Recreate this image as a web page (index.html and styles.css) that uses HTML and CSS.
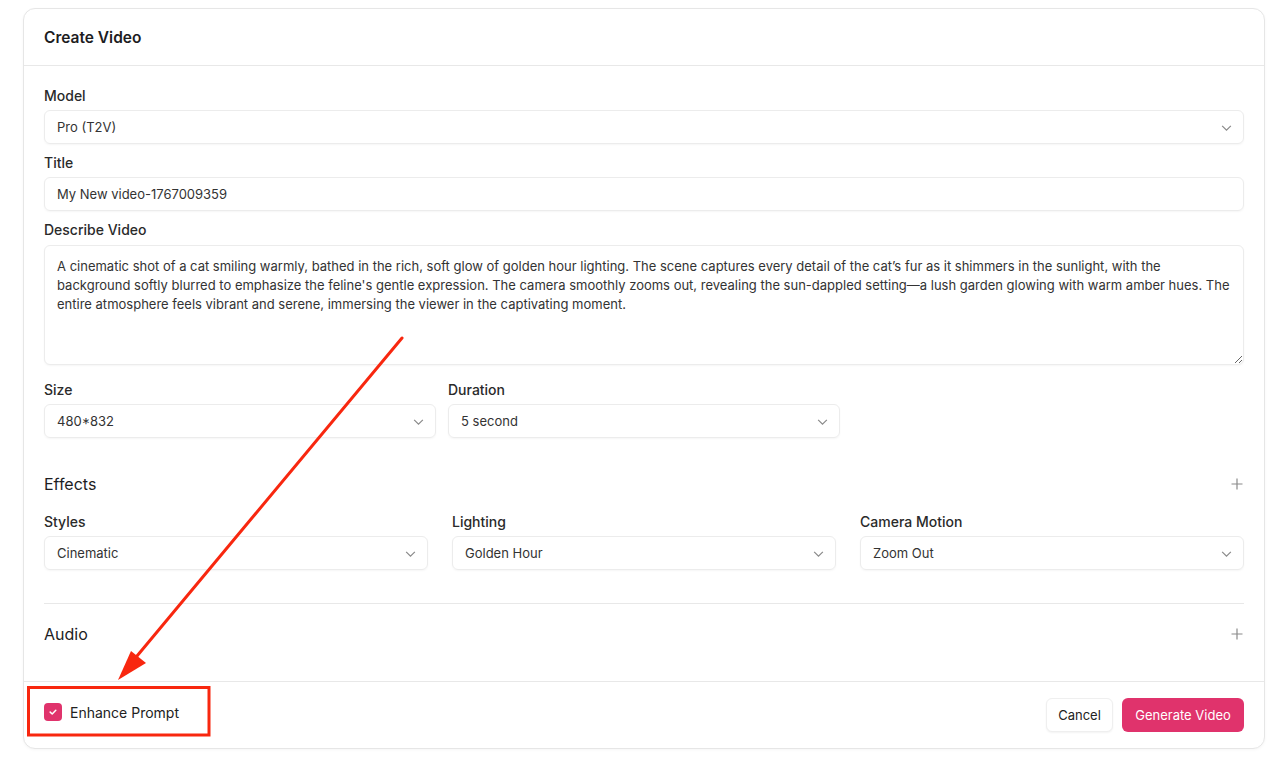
FILE: index.html
```html
<!DOCTYPE html>
<html lang="en">
<head>
<meta charset="utf-8">
<title>Create Video</title>
<link rel="stylesheet" href="styles.css">
</head>
<body>
<div class="page">
  <div class="card">
    <div class="card-header"><h1 class="card-title">Create Video</h1></div>
    <div class="card-body">
      <div class="field">
        <label class="label">Model</label>
        <div class="select"><span>Pro (T2V)</span><svg class="chev" viewBox="0 0 12 12"><path d="M2 4.5l4 4 4-4"/></svg></div>
      </div>
      <div class="field">
        <label class="label">Title</label>
        <div class="input">My New video-1767009359</div>
      </div>
      <div class="field field-text">
        <label class="label">Describe Video</label>
        <textarea class="textarea" rows="5">A cinematic shot of a cat smiling warmly, bathed in the rich, soft glow of golden hour lighting. The scene captures every detail of the cat’s fur as it shimmers in the sunlight, with the background softly blurred to emphasize the feline's gentle expression. The camera smoothly zooms out, revealing the sun-dappled setting—a lush garden glowing with warm amber hues. The entire atmosphere feels vibrant and serene, immersing the viewer in the captivating moment.</textarea>
      </div>
      <div class="grid3">
        <div class="field">
          <label class="label">Size</label>
          <div class="select"><span>480*832</span><svg class="chev" viewBox="0 0 12 12"><path d="M2 4.5l4 4 4-4"/></svg></div>
        </div>
        <div class="field">
          <label class="label">Duration</label>
          <div class="select"><span>5 second</span><svg class="chev" viewBox="0 0 12 12"><path d="M2 4.5l4 4 4-4"/></svg></div>
        </div>
      </div>

      <div class="section effects">
        <div class="section-head">
          <h2 class="section-title">Effects</h2>
          <svg class="plus" viewBox="0 0 12 12"><path d="M6 0.5v11M0.5 6h11"/></svg>
        </div>
        <div class="grid3 wide-gap">
          <div class="field">
            <label class="label">Styles</label>
            <div class="select"><span>Cinematic</span><svg class="chev" viewBox="0 0 12 12"><path d="M2 4.5l4 4 4-4"/></svg></div>
          </div>
          <div class="field">
            <label class="label">Lighting</label>
            <div class="select"><span>Golden Hour</span><svg class="chev" viewBox="0 0 12 12"><path d="M2 4.5l4 4 4-4"/></svg></div>
          </div>
          <div class="field">
            <label class="label">Camera Motion</label>
            <div class="select"><span>Zoom Out</span><svg class="chev" viewBox="0 0 12 12"><path d="M2 4.5l4 4 4-4"/></svg></div>
          </div>
        </div>
      </div>

      <div class="section audio">
        <div class="section-head">
          <h2 class="section-title">Audio</h2>
          <svg class="plus" viewBox="0 0 12 12"><path d="M6 0.5v11M0.5 6h11"/></svg>
        </div>
      </div>
    </div>
    <div class="card-footer">
      <label class="check">
        <span class="box"><svg viewBox="0 0 12 12"><path d="M3.2 6.1l2 1.9 3.6-3.8"/></svg></span>
        <span class="check-text">Enhance Prompt</span>
      </label>
      <div class="actions">
        <button class="btn btn-ghost">Cancel</button>
        <button class="btn btn-primary">Generate Video</button>
      </div>
    </div>
  </div>
</div>
<svg class="annotation" width="1272" height="768" viewBox="0 0 1272 768">
  <line x1="402" y1="338" x2="132" y2="662" stroke="#f8270f" stroke-width="3" stroke-linecap="round"/>
  <polygon points="118,680 131,651 146,663" fill="#f8270f"/>
  <rect x="28.5" y="687.5" width="180.5" height="47.5" fill="none" stroke="#f8270f" stroke-width="3"/>
</svg>
</body>
</html>
```
FILE: styles.css
```css
* { box-sizing: border-box; }
html, body { margin: 0; padding: 0; background: #fff; }
body {
  font-family: Inter, "Noto Sans", "Liberation Sans", sans-serif;
  color: #222;
  width: 1272px;
  height: 768px;
  overflow: hidden;
  position: relative;
}
.page { padding: 8px 7px 0 23px; }
.card {
  border: 1px solid #e6e6e6;
  border-radius: 12px;
  background: #fff;
  box-shadow: 0 1px 3px rgba(0,0,0,0.04);
}
.card-header {
  height: 57px;
  display: flex;
  align-items: center;
  padding: 0 20px;
  border-bottom: 1px solid #e8e8e8;
}
.card-title { margin: 0; font-size: 15.5px; font-weight: 600; color: #1d1d1f; }
.card-body { padding: 20px 20px 0 20px; }
.field { display: flex; flex-direction: column; gap: 4px; margin-bottom: 9px; }
.field-text { margin-bottom: 15px; }
.label { font-size: 14px; line-height: 20px; font-weight: 500; color: #2a2a2a; }
.select, .input {
  height: 34px;
  border: 1px solid #ececec;
  border-radius: 6px;
  box-shadow: 0 1px 2px rgba(0,0,0,0.04);
  display: flex;
  align-items: center;
  justify-content: space-between;
  padding: 0 10px 0 12px;
  font-size: 13px;
  color: #333;
}
.chev { width: 13px; height: 13px; fill: none; stroke: #8a8a8a; stroke-width: 1.1; }
.textarea {
  display: block;
  width: 100%;
  height: 120px;
  border: 1px solid #ececec;
  border-radius: 6px;
  box-shadow: 0 1px 2px rgba(0,0,0,0.04);
  padding: 11px 12px;
  font-family: inherit;
  font-size: 13px;
  line-height: 19px;
  color: #333;
  resize: vertical;
  outline: none;
  margin-top: 1px;
}
.grid3 { display: grid; grid-template-columns: repeat(3, 1fr); column-gap: 12px; }
.grid3.wide-gap { column-gap: 24px; }
.section-head { display: flex; align-items: center; justify-content: space-between; height: 26px; }
.section-title { margin: 0; font-size: 16px; font-weight: 400; color: #1d1d1f; }
.plus { width: 12px; height: 12px; fill: none; stroke: #8a8a8a; stroke-width: 1.2; margin-right: 1px; }
.effects { padding-top: 24px; padding-bottom: 33px; border-bottom: 1px solid #e8e8e8; }
.effects .section-head { margin-bottom: 15px; }
.effects .field { margin-bottom: 0; }
.audio { padding: 17px 0 34px; }
.card-footer {
  border-top: 1px solid #e8e8e8;
  padding: 16px 20px 16px;
  display: flex;
  align-items: flex-start;
  justify-content: space-between;
}
.check { display: flex; align-items: center; gap: 8px; height: 28px; }
.box {
  width: 18px; height: 18px;
  border-radius: 4px;
  background: #e0336c;
  display: flex; align-items: center; justify-content: center;
}
.box svg { width: 12px; height: 12px; fill: none; stroke: #fff; stroke-width: 1.5; stroke-linecap: round; stroke-linejoin: round; }
.check-text { font-size: 14px; color: #222; }
.actions { display: flex; gap: 9px; }
.btn {
  height: 34px;
  border-radius: 6px;
  font-family: inherit;
  font-size: 13px;
  padding: 0;
  white-space: nowrap;
  cursor: pointer;
}
.btn-ghost { background: #fff; color: #222; border: 1px solid #efefef; box-shadow: 0 1px 2px rgba(0,0,0,0.05); width: 67px; }
.btn-primary { background: #e0336c; color: #fff; border: none; width: 122px; }
.annotation { position: absolute; left: 0; top: 0; pointer-events: none; }
```
